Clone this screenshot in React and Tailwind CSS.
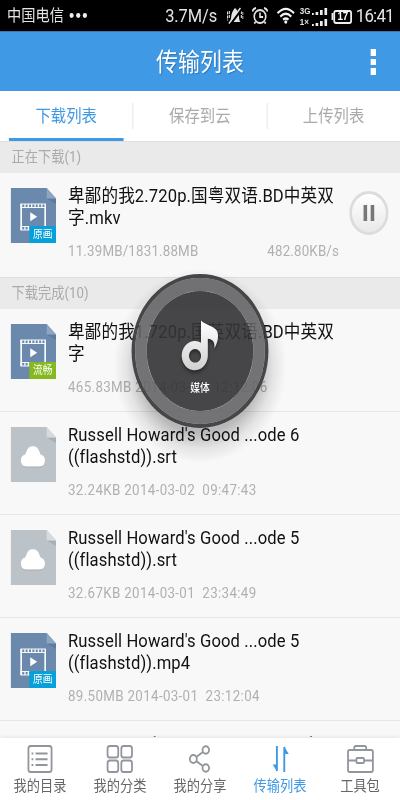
import React from "react";

const files = [
  {
    id: 1,
    kind: "video",
    name: ["卑鄙的我1.720p.国英双语.BD中英双", "字"],
    meta: "465.83MB 2014-03-02  12:12:06",
    tag: "流畅",
    tagColor: "bg-[#86b81f]",
  },
  {
    id: 2,
    kind: "cloud",
    name: ["Russell Howard's Good ...ode 6", "((flashstd)).srt"],
    meta: "32.24KB 2014-03-02  09:47:43",
  },
  {
    id: 3,
    kind: "cloud",
    name: ["Russell Howard's Good ...ode 5", "((flashstd)).srt"],
    meta: "32.67KB 2014-03-01  23:34:49",
  },
  {
    id: 4,
    kind: "video",
    name: ["Russell Howard's Good ...ode 5", "((flashstd)).mp4"],
    meta: "89.50MB 2014-03-01  23:12:04",
    tag: "原画",
    tagColor: "bg-[#08a0da]",
  },
];

const StatusBar = () => (
  <div className="flex h-[31px] shrink-0 items-center bg-black pl-2 pr-[7px] text-[#e4e4e4]">
    <span className="text-[16px] leading-[31px]">中国电信</span>
    <svg className="ml-[6px]" width="20" height="5" viewBox="0 0 20 5" fill="#eee">
      <circle cx="2.5" cy="2.5" r="2.4" />
      <circle cx="10" cy="2.5" r="2.4" />
      <circle cx="17.5" cy="2.5" r="2.4" />
    </svg>
    <span className="ml-auto pt-[2px] text-[18.5px] tracking-[-0.1px]">3.7M/s</span>
    {/* muted ringer */}
    <svg className="ml-[11px]" width="19" height="18" viewBox="0 0 19 18" fill="none" stroke="#e4e4e4">
      <path d="M3.500 15c2-2 1-6 2.500-9C7 3.500 8 3 8.500 1.500h2c.500 1.500 1.500 2 2.500 4.500 1.500 3 .500 7 2.500 9z" fill="#e4e4e4" stroke="none" />
      <path d="M1 4.500v9M3 4v8M16.500 4v8M18.300 5v8" strokeWidth="1.200" strokeDasharray="3 1" />
      <path d="M4 17.500L17 2" stroke="#000" strokeWidth="2.500" />
      <path d="M2.500 16.500L15.500 1" strokeWidth="1.700" />
    </svg>
    {/* alarm */}
    <svg className="ml-[9px]" width="19" height="18" viewBox="0 0 19 18" fill="none" stroke="#e4e4e4" strokeWidth="1.800">
      <circle cx="9.500" cy="9.500" r="6.500" />
      <path d="M9.500 5.500V10H13M1 4.500Q2 1.500 5 1M18 4.500Q17 1.500 14 1M4.500 15L3 16.500M14.500 15l1.500 1.500" />
    </svg>
    {/* wifi */}
    <svg className="ml-[9px]" width="21" height="17" viewBox="0 0 21 17" fill="none" stroke="#f2f2f2" strokeWidth="2.300">
      <path d="M1.200 6.200Q10.500-2.500 19.800 6.200M4.300 9.600Q10.500 4 16.700 9.600M7.400 12.700Q10.500 10.300 13.600 12.700" />
      <circle cx="10.500" cy="15" r="1.700" fill="#f2f2f2" stroke="none" />
    </svg>
    <div className="ml-[5px] flex flex-col gap-[4px] pt-[2px]">
      <Signal label="3G" />
      <Signal label="1×" />
    </div>
    <div className="ml-[5px] flex items-center pt-[2px]">
      <span className="h-[7px] w-[2px] bg-[#eee]" />
      <span className="flex h-[14px] w-[21px] items-center justify-center rounded-[3px] border-2 border-[#eee] font-['Liberation_Sans'] text-[11px] font-bold leading-none text-white">
        17
      </span>
    </div>
    <span className="ml-[4px] pt-[2px] text-[19px] tracking-[-0.900px]">16:41</span>
  </div>
);

const Signal = ({ label }) => (
  <div className="flex h-[7px] items-end gap-[2px]">
    <span className="w-[12px] font-['Liberation_Sans'] text-[9px] font-bold leading-[7px]">{label}</span>
    <span className="size-[2px] bg-[#eee]" />
    <span className="h-[3px] w-[3px] bg-[#eee]" />
    <span className="h-[5px] w-[3px] bg-[#eee]" />
    <span className="h-[7px] w-[3px] bg-[#eee]" />
  </div>
);

const Header = () => (
  <header className="relative flex h-[60px] shrink-0 items-center justify-center border-t border-[#3479b3] bg-[#3f99e4] pt-[3px]">
    <h1 className="text-[24.700px] leading-none text-white [text-shadow:1px_1px_1px_#2b78ba]">传输列表</h1>
    <div className="absolute right-[27px] top-[17px] flex flex-col gap-[3px]">
      <span className="size-[6.500px] bg-white" />
      <span className="size-[6.500px] bg-white" />
      <span className="size-[6.500px] bg-white" />
    </div>
  </header>
);

const Tabs = () => (
  <nav className="flex h-[50px] shrink-0 items-center bg-white text-[17.300px] text-[#aaa]">
    <div className="ml-[10px] mr-[10px] flex h-[50px] flex-1 items-center justify-center border-b-[3px] border-[#3f99e4] pt-[5px] text-[#3f99e4]">
      下载列表
    </div>
    <span className="h-[26px] w-px bg-[#e2e2e2]" />
    <div className="w-[149.500px] pt-[2px] text-center">保存到云</div>
    <span className="h-[26px] w-px bg-[#e2e2e2]" />
    <div className="w-[149.500px] pt-[2px] text-center">上传列表</div>
  </nav>
);

const SectionTitle = ({ children }) => (
  <div className="flex h-[32px] shrink-0 items-center border-t border-[#dedede] bg-[#eaeaea] pl-[13px] text-[14.900px] text-[#aaa]">
    {children}
  </div>
);

const FileIcon = ({ kind, tag, tagColor }) => (
  <div className="relative mt-[15px] h-[55px] w-[51px] shrink-0">
    <svg width="51" height="55" viewBox="0 0 51 55">
      <path d="M0 0H40.500L51 10.500V55H0z" fill={kind === "video" ? "#6a89ad" : "#bcc3c8"} />
      <path d="M40.500 10.500H51V16z" fill={kind === "video" ? "#5d7a9c" : "#a9b0b5"} />
      <path d="M40.500 0L51 10.500H40.500z" fill={kind === "video" ? "#8ba5c2" : "#d6dadc"} />
      {kind === "video" ? (
        <g>
          <rect x="11.800" y="17" width="27" height="24" fill="none" stroke="#f6f8fa" strokeWidth="1.900" />
          <path d="M11 17.700H39.700M11 40.300H39.700" stroke="#f6f8fa" strokeWidth="4.600" />
          <path d="M13 17.700H38.500M13 40.300H38.500" stroke="#6a89ad" strokeWidth="2.400" strokeDasharray="2.300 1.500" />
          <path d="M22 24.300L29.800 28.800L22 33.300z" fill="#fff" />
        </g>
      ) : (
        <g>
          <path d="M17 40.500a6 6 0 0 1-1-11.500c1-2 2-2.500 2-3.500a7.500 7.500 0 0 1 14 0c0 1 1 1.500 2 3.500a6 6 0 0 1-1 11.500z" fill="#a5acb1" />
          <path d="M17 39.500a6 6 0 0 1-1-11.800c1-1.700 1.200-2 1.800-3.200a7.600 7.600 0 0 1 14.400 0c.6 1.200.8 1.500 1.800 3.200a6 6 0 0 1-1 11.800z" fill="#fff" />
        </g>
      )}
    </svg>
    {tag && (
      <span className={`absolute bottom-0 right-0 flex h-[17px] w-[30px] items-center justify-center pt-[1px] text-[11px] text-white ${tagColor}`}>
        {tag}
      </span>
    )}
  </div>
);

const FileRow = ({ file }) => (
  <div className="flex h-[103px] shrink-0 border-b border-[#e6e6e6] pl-[12px]">
    <FileIcon kind={file.kind} tag={file.tag} tagColor={file.tagColor} />
    <div className="ml-[13.500px] pt-[12px]">
      <FileName lines={file.name} />
      <p className="mt-[12px] whitespace-pre text-[15px] leading-[20px] tracking-[0.390px] text-[#b0b0b0]">{file.meta}</p>
    </div>
  </div>
);

const FileName = ({ lines }) => (
  <div className="whitespace-nowrap text-[18.700px] leading-[22px] tracking-[0.120px] text-[#111]">
    {lines.map((line) => (
      <p key={line}>{line}</p>
    ))}
  </div>
);

const ActiveDownload = () => (
  <div className="flex h-[104px] shrink-0 pl-[12px]">
    <FileIcon kind="video" tag="原画" tagColor="bg-[#08a0da]" />
    <div className="ml-[13.500px] w-[305px] pt-[12px]">
      <FileName lines={["卑鄙的我2.720p.国粤双语.BD中英双", "字.mkv"]} />
      <div className="mt-[12px] flex justify-between text-[15px] leading-[20px] tracking-[0.200px] text-[#b0b0b0]">
        <span>11.39MB/1831.88MB</span>
        <span>482.80KB/s</span>
      </div>
    </div>
    <button className="ml-[11.500px] mt-[18px] flex size-[44px] items-center justify-center gap-[3.500px] rounded-full border-[3.500px] border-[#dcdcdc] bg-linear-to-b from-white to-[#e9e9e9]">
      <span className="h-[16px] w-[4px] bg-[#777]" />
      <span className="h-[16px] w-[4px] bg-[#777]" />
    </button>
  </div>
);

// Round floating button that lies over the list
const MediaDisc = () => (
  <div className="absolute left-[148px] top-[273.500px] size-[154px]">
    <svg width="154" height="154" viewBox="0 0 154 154" className="overflow-visible">
      <defs>
        <linearGradient id="note" x1="0" y1="0" x2="0" y2="1">
          <stop offset="0" stopColor="#fff" />
          <stop offset="1" stopColor="#d0d0d0" />
        </linearGradient>
        <radialGradient id="shade" cx="0.5" cy="0.5" r="0.5">
          <stop offset="0.680" stopColor="#000" stopOpacity="0.260" />
          <stop offset="0.850" stopColor="#000" stopOpacity="0.080" />
          <stop offset="1" stopColor="#000" stopOpacity="0" />
        </radialGradient>
        <mask id="outside">
          <rect x="-60" y="-60" width="280" height="300" fill="#fff" />
          <circle cx="77" cy="77" r="76" fill="#000" />
        </mask>
      </defs>
      <circle cx="77" cy="92" r="97" fill="url(#shade)" mask="url(#outside)" />
      <circle cx="77" cy="77" r="66.500" fill="none" stroke="#646466" strokeWidth="13" strokeOpacity="0.900" />
      <circle cx="77" cy="77" r="60" fill="#343436" fillOpacity="0.910" />
      <circle cx="77" cy="77" r="75" fill="none" stroke="#373739" strokeWidth="4" strokeOpacity="0.920" />
      <g className="drop-shadow-[0_2px_2px_rgba(0,0,0,0.500)]">
        <path
          fillRule="evenodd"
          fill="url(#note)"
          d="M78.100 46.500C81 50 91 51.500 95.500 56C99 61 97 69 93 74.500C94 69.500 92.500 65.500 85.800 64.800V82A14.700 14.700 0 1 1 78.100 68.700zM71.400 75a6.800 6.800 0 1 0 .01 0z"
        />
      </g>
    </svg>
    <span className="absolute inset-x-0 top-[107px] text-center text-[11px] font-medium leading-[16px] text-white">媒体</span>
  </div>
);

const navItems = [
  {
    label: "我的目录",
    icon: (
      <>
        <rect x="1" y="1" width="26" height="26" rx="2.500" />
        <path d="M9 8.500H22.500M9 14.300H22.500M9 20H22.500" />
        <path d="M4.500 8.500H6.500M4.500 14.300H6.500M4.500 20H6.500" />
      </>
    ),
  },
  {
    label: "我的分类",
    icon: (
      <>
        <rect x="0" y="1" width="12" height="11.500" rx="2.500" />
        <rect x="15.500" y="1" width="12" height="11.500" rx="2.500" />
        <rect x="0" y="15.500" width="12" height="11.500" rx="2.500" />
        <rect x="15.500" y="15.500" width="12" height="11.500" rx="2.500" />
      </>
    ),
  },
  {
    label: "我的分享",
    icon: (
      <>
        <circle cx="6.500" cy="14" r="3.900" />
        <circle cx="20.500" cy="5" r="3.700" />
        <circle cx="20.500" cy="23" r="3.700" />
        <path d="M9.800 12L17.300 7M9.800 16.200L17.300 21" />
      </>
    ),
  },
  {
    label: "传输列表",
    active: true,
    icon: (
      <>
        <path d="M10.500 1V26M18.800 2V27" strokeWidth="2.100" />
        <path d="M10.500 26.500V19.500H5.800zM18.800 1.500V9H23.800z" fill="currentColor" stroke="none" />
      </>
    ),
  },
  {
    label: "工具包",
    icon: (
      <>
        <rect x="0.500" y="5" width="28" height="22" rx="2" />
        <path d="M7.500 5V3Q7.500 1 9.500 1H19Q21 1 21 3V5M1 15.500H10M18.500 15.500H28" />
        <rect x="10" y="13" width="8.500" height="5" rx="1" />
      </>
    ),
  },
];

const BottomNav = () => (
  <footer className="z-10 flex h-[62px] shrink-0 bg-white shadow-[0_-1px_4px_rgba(0,0,0,0.080)]">
    {navItems.map((item) => (
      <div
        key={item.label}
        className={`flex flex-1 flex-col items-center pt-[7px] ${item.active ? "text-[#3f99e4]" : "text-[#91959c]"}`}
      >
        <svg width="28" height="28" viewBox="0 0 28 28" fill="none" stroke="currentColor" strokeWidth="2" className="overflow-visible">
          {item.icon}
        </svg>
        <span className={`mt-[2.500px] text-[14.900px] leading-[20px] ${item.active ? "" : "text-[#666]"}`}>{item.label}</span>
      </div>
    ))}
  </footer>
);

const App = () => {
  return (
    <div className="h-[800px] w-[400px] overflow-hidden">
      {/* 9:16 screen squeezed into a 1:2 frame */}
      <div className="relative flex h-[800px] w-[450px] origin-top-left scale-x-[0.8889] flex-col bg-[#f8f8f8] font-['Roboto','Noto_Sans_CJK_SC',sans-serif]">
        <StatusBar />
        <Header />
        <Tabs />
        <main className="flex min-h-0 flex-1 flex-col overflow-hidden">
          <SectionTitle>正在下载(1)</SectionTitle>
          <ActiveDownload />
          <SectionTitle>下载完成(10)</SectionTitle>
          {files.map((file) => (
            <FileRow key={file.id} file={file} />
          ))}
          {/* tips of the next row's title, the rest is under the bottom bar */}
          <div className="flex h-[30px] shrink-0 gap-[173.500px] pl-[173px] pt-[15px]">
            <span className="h-px w-[2px] bg-[#777]" />
            <span className="h-px w-[2px] bg-[#777]" />
          </div>
        </main>
        <BottomNav />
        <MediaDisc />
      </div>
    </div>
  );
};

export default App;
